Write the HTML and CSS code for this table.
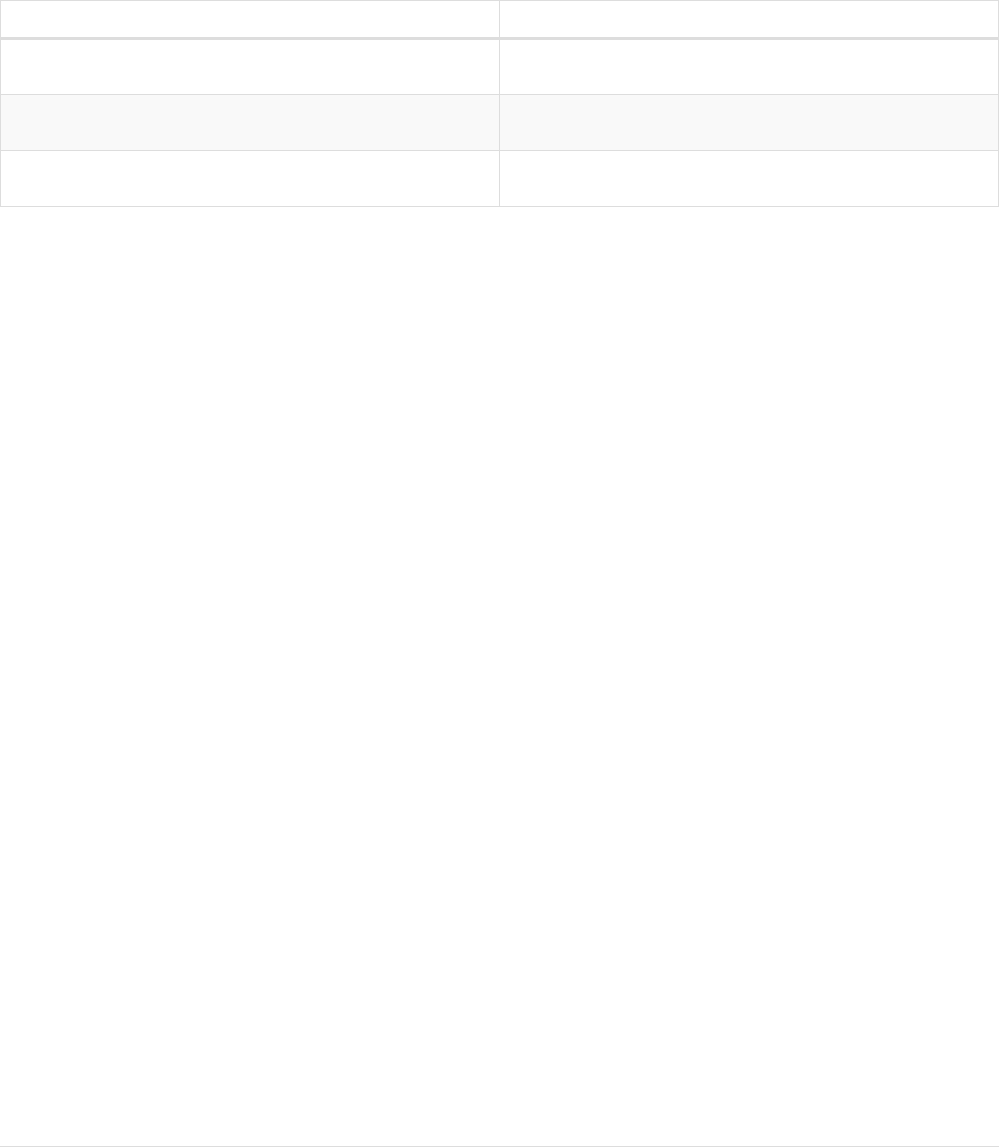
FILE: index.html
```html
<!DOCTYPE html>
<html lang="en">
<head>
    <meta charset="UTF-8">
    <meta name="viewport" content="width=device-width, initial-scale=1.0">
    <title>Table</title>
    <link rel="stylesheet" href="styles.css">
</head>
<body>

    <div class="page">
        <table class="grid">
            <thead>
                <tr>
                    <th></th>
                    <th></th>
                </tr>
            </thead>
            <tbody>
                <tr>
                    <td></td>
                    <td></td>
                </tr>
                <tr>
                    <td></td>
                    <td></td>
                </tr>
                <tr>
                    <td></td>
                    <td></td>
                </tr>
            </tbody>
        </table>

        <footer class="footer"></footer>
    </div>

</body>
</html>
```

FILE: styles.css
```css
* {
    box-sizing: border-box;
}

body {
    font-family: "Liberation Sans", Arial, sans-serif;
    font-size: 14px;
    line-height: 20px;
    color: #333;
    background: #fff;
    margin: 0;
}

.page {
    display: flex;
    flex-direction: column;
    min-height: 100vh;
}

.grid {
    width: 100%;
    border-collapse: collapse;
    border-spacing: 0;
}

.grid th,
.grid td {
    width: 50%;
    padding: 0;
    border: 1px solid #ddd;
    text-align: left;
}

.grid th {
    height: 38px;
    border-bottom-width: 3px;
}

.grid td {
    height: 56px;
}

.grid tbody tr:nth-child(even) td {
    background-color: #f9f9f9;
}

.footer {
    margin-top: auto;
    border-top: 1px solid #ddd;
}
```
